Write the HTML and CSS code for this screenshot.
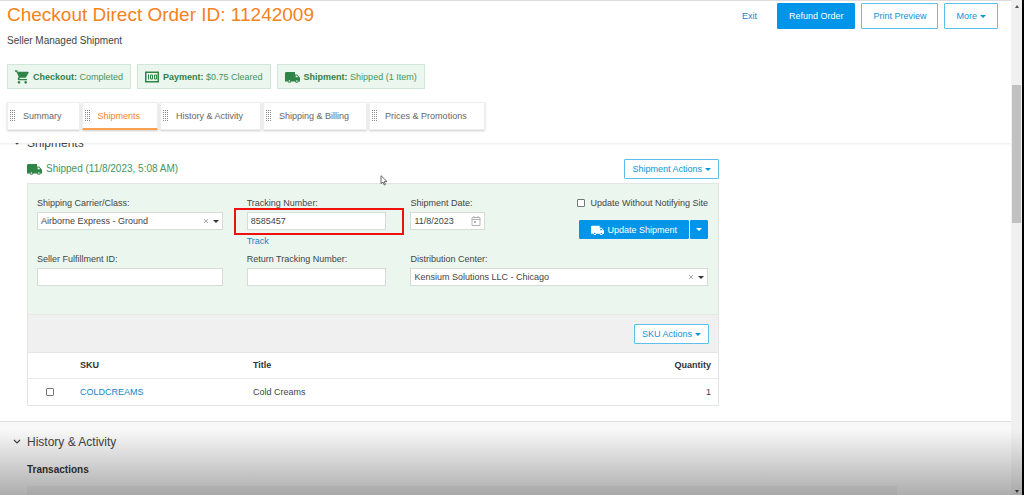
FILE: index.html
```html
<!DOCTYPE html>
<html lang="en">
<head>
<meta charset="utf-8">
<meta name="viewport" content="width=device-width, initial-scale=1">
<title>Checkout Direct Order</title>
<link rel="stylesheet" href="styles.css">
</head>
<body>
<svg class="defs" aria-hidden="true">
  <symbol id="truck" viewBox="0 0 24 18">
    <path fill="currentColor" d="M2 1h14v4h3.500L24 10v6h-2.200a3 3 0 0 1-5.800 0H10a3 3 0 0 1-5.800 0H0V3a2 2 0 0 1 2-2z"/>
    <path fill="var(--hole)" d="M17 6.500h2l2.200 3H17z"/>
    <circle cx="7" cy="15.300" r="1.300" fill="var(--hole)"/>
    <circle cx="19" cy="15.300" r="1.300" fill="var(--hole)"/>
  </symbol>
  <symbol id="grip" viewBox="0 0 6 12">
    <path d="M.5 0v12M2.500 0v12M4.500 0v12" stroke="#8a8a8a" stroke-width="1" stroke-dasharray="1 1" fill="none"/>
  </symbol>
</svg>
<div class="window">
  <main class="page">
    <header class="header">
      <div class="title-row">
        <h1 class="title">Checkout Direct Order ID: 11242009</h1>
        <nav class="actions">
          <a class="exit" href="#">Exit</a>
          <button class="btn btn-primary btn-large">Refund Order</button>
          <button class="btn btn-large">Print Preview</button>
          <button class="btn btn-large">More <span class="caret"></span></button>
        </nav>
      </div>
      <p class="subtitle">Seller Managed Shipment</p>
      <div class="badges">
        <div class="badge">
          <svg class="icon-cart" viewBox="1 2 21 20"><path fill="currentColor" d="M7 18c-1.100 0-2 .9-2 2s.9 2 2 2 2-.9 2-2-.9-2-2-2zM1 2v2h2l3.600 7.600-1.400 2.400C4.500 15.400 5.500 17 7 17h12v-2H7.400l1.200-2h7.400c.8 0 1.400-.4 1.800-1l3.600-6.500A1 1 0 0 0 20.500 4H5.200L4.300 2H1zm16 16c-1.100 0-2 .9-2 2s.9 2 2 2 2-.9 2-2-.9-2-2-2z"/></svg>
          <span><b>Checkout:</b> Completed</span>
        </div>
        <div class="badge">
          <svg class="icon-cash" viewBox="0 0 14 12"><path fill="none" stroke="currentColor" stroke-width="1.500" d="M.75 1.250h12.500v9.500H.75z"/><path fill="none" stroke="currentColor" d="M3.500 3.500v5M5.500 4h2v4h-2zM9.500 4h2v4h-2z"/></svg>
          <span><b>Payment:</b> $0.75 Cleared</span>
        </div>
        <div class="badge">
          <svg class="icon-truck"><use href="#truck"/></svg>
          <span><b>Shipment:</b> Shipped (1 Item)</span>
        </div>
      </div>
      <nav class="tabs">
        <a class="tab" href="#"><svg class="grip"><use href="#grip"/></svg>Summary</a>
        <a class="tab active" href="#"><svg class="grip"><use href="#grip"/></svg>Shipments</a>
        <a class="tab" href="#"><svg class="grip"><use href="#grip"/></svg>History &amp; Activity</a>
        <a class="tab" href="#"><svg class="grip"><use href="#grip"/></svg>Shipping &amp; Billing</a>
        <a class="tab" href="#"><svg class="grip"><use href="#grip"/></svg>Prices &amp; Promotions</a>
      </nav>
    </header>

    <section class="shipments">
      <h2 class="section-title"><svg class="chevron" viewBox="0 0 8 6"><path d="M1 1l3 3 3-3"/></svg>Shipments</h2>
      <div class="card-wrap">
        <div class="status-row">
          <div class="status"><svg class="icon-truck"><use href="#truck"/></svg>Shipped (11/8/2023, 5:08 AM)</div>
          <button class="btn">Shipment Actions <span class="caret"></span></button>
        </div>
        <div class="card">
          <form class="form">
            <div class="field">
              <label for="carrier">Shipping Carrier/Class:</label>
              <div class="picker">
                <select id="carrier"><option>Airborne Express - Ground</option></select>
                <span class="picker-icons"><svg class="clear" viewBox="0 0 6 6"><path d="M1 1l4 4M5 1L1 5"/></svg><span class="caret dark"></span></span>
              </div>
            </div>
            <div class="field tracking">
              <label for="tracking">Tracking Number:</label>
              <input id="tracking" type="text" value="8585457">
              <a class="track" href="#">Track</a>
            </div>
            <div class="date-row">
              <div class="field">
                <label for="date">Shipment Date:</label>
                <div class="date">
                  <input id="date" type="text" value="11/8/2023">
                  <svg class="calendar" viewBox="0 0 10 10"><path fill="none" stroke="#b4b4b4" d="M1 1.500h8v8H1zM1 3.500h8M3 0v2M7 0v2"/><path fill="#b4b4b4" d="M3 5h2v2H3z"/></svg>
                </div>
              </div>
              <div class="update">
                <label class="check"><input type="checkbox"> Update Without Notifying Site</label>
                <div class="split">
                  <button type="button" class="btn btn-primary btn-update"><svg class="icon-truck"><use href="#truck"/></svg>Update Shipment</button>
                  <button type="button" class="btn btn-primary btn-more" aria-label="More update options"><span class="caret"></span></button>
                </div>
              </div>
            </div>
            <div class="field">
              <label for="fulfillment">Seller Fulfillment ID:</label>
              <input id="fulfillment" type="text">
            </div>
            <div class="field">
              <label for="return">Return Tracking Number:</label>
              <input id="return" type="text">
            </div>
            <div class="field">
              <label for="center">Distribution Center:</label>
              <div class="picker">
                <select id="center"><option>Kensium Solutions LLC - Chicago</option></select>
                <span class="picker-icons"><svg class="clear" viewBox="0 0 6 6"><path d="M1 1l4 4M5 1L1 5"/></svg><span class="caret dark"></span></span>
              </div>
            </div>
          </form>
          <div class="toolbar"><button class="btn">SKU Actions <span class="caret"></span></button></div>
          <table class="items">
            <thead><tr><th class="col-check"></th><th class="col-sku">SKU</th><th>Title</th><th class="num">Quantity</th></tr></thead>
            <tbody><tr><td class="col-check"><input type="checkbox" aria-label="Select COLDCREAMS"></td><td><a href="#">COLDCREAMS</a></td><td>Cold Creams</td><td class="num">1</td></tr></tbody>
          </table>
        </div>
      </div>
    </section>

    <section class="history">
      <h2 class="section-title"><svg class="chevron" viewBox="0 0 8 6"><path d="M1 1l3 3 3-3"/></svg>History &amp; Activity</h2>
      <h3 class="transactions">Transactions</h3>
      <div class="transactions-table"></div>
    </section>
  </main>
  <div class="scrollbar"><span class="arrow up"></span><span class="thumb"></span><span class="arrow down"></span></div>
  <div class="shade"></div>
  <svg class="pointer" viewBox="0 0 8 11"><path d="M1 .7v8l2-1.700 1.300 3 1.200-.5L4.200 6.600H7z" fill="#fff" stroke="#444" stroke-width=".8"/></svg>
</div>
</body>
</html>
```

FILE: styles.css
```css
* { box-sizing: border-box; }
body {
  margin: 0;
  font: 9px/12px "Liberation Sans", Arial, sans-serif;
  color: #444;
  background: #fff;
}
h1, h2, h3, p { margin: 0; font-weight: normal; }
a { color: #1685c4; text-decoration: none; }
button, input, select { font: inherit; color: inherit; margin: 0; }
.defs { position: absolute; width: 0; height: 0; }

.window {
  position: relative;
  display: flex;
  height: 100vh;
  overflow: hidden;
  border-right: 2px solid #000;
}
.page { flex: 1; min-width: 0; display: flex; flex-direction: column; overflow: hidden; }

.header {
  position: relative;
  z-index: 1;
  flex: none;
  padding: 2px 13px 13px 7px;
  border-top: 1px solid #ddd;
  background: #fff;
  box-shadow: 0 1px 2px rgba(0, 0, 0, .08);
}
.title-row { display: flex; justify-content: space-between; }
.title { font-size: 19px; line-height: 24px; color: #f58220; }
.actions { display: flex; align-items: center; gap: 6px; }
.exit { margin-right: 14px; }
.subtitle { margin-top: 6px; font-size: 10px; }

.btn {
  display: inline-flex;
  align-items: center;
  justify-content: center;
  gap: 3px;
  height: 20px;
  padding: 0 7px;
  border: 1px solid #5cc0ea;
  border-radius: 1px;
  background: #fff;
  color: #0d93d8;
  white-space: nowrap;
}
.btn-large { height: 26px; padding: 0 11px; }
.btn-primary { background: #0095e8; border-color: #0095e8; color: #fff; }
.caret { border: 3px solid transparent; border-top-color: currentColor; border-bottom: 0; }
.caret.dark { color: #333; }

.badges { display: flex; gap: 6px; margin-top: 17px; }
.badge {
  display: flex;
  align-items: center;
  gap: 4px;
  height: 25px;
  padding: 0 7px;
  border: 1px solid #cfe6d8;
  background: #ebf6ef;
  color: #469559;
}
.badge b { color: #338048; }
.icon-cart { width: 14px; height: 14px; }
.icon-cash { width: 14px; height: 12px; }
.icon-truck { --hole: #ebf6ef; width: 15px; height: 12px; }
.icon-cart, .icon-cash, .badge .icon-truck { color: #2f8548; }

.tabs { display: flex; gap: 2px; margin-top: 13px; }
.tab {
  display: flex;
  align-items: center;
  gap: 7px;
  height: 28px;
  padding: 0 17px 0 2px;
  border: 1px solid #eee;
  box-shadow: 0 1px 2px rgba(0, 0, 0, .2);
  color: #666;
}
.tab.active { color: #f58220; border-bottom: 2px solid #f9a050; }
.grip { width: 6px; height: 12px; }

.section-title { display: flex; align-items: center; gap: 6px; font-size: 12px; line-height: 16px; }
.chevron { width: 8px; height: 6px; fill: none; stroke: #444; stroke-width: 1.2; }

.shipments { margin-top: -8px; padding: 0 12px 15px 13px; border-bottom: 1px solid #ddd; }
.card-wrap { max-width: 706px; padding-left: 14px; }
.status-row { display: flex; align-items: center; justify-content: space-between; padding: 8px 0 4px; }
.status { display: flex; align-items: center; gap: 4px; font-size: 10px; color: #469559; }
.status .icon-truck { --hole: #fff; color: #2f8548; }
.card { border: 1px solid #e2e7e4; }
.form {
  display: grid;
  grid-template-columns: 186fr 140fr 298fr;
  gap: 6px 24px;
  padding: 13px 10px 28px 9px;
  background: #ebf6ef;
}
.field { display: flex; flex-direction: column; gap: 3px; min-width: 0; }
.field input, .field select {
  width: 100%;
  height: 18px;
  padding: 0 3px;
  border: 1px solid #d5dcd8;
  border-radius: 0;
  background: #fff;
  appearance: none;
  outline: 0;
}
.picker, .date, .tracking { position: relative; }
.picker select { display: block; }
.picker-icons {
  position: absolute;
  inset: 0 4px 0 auto;
  display: flex;
  align-items: center;
  gap: 4px;
  pointer-events: none;
}
.clear { width: 6px; height: 6px; stroke: #aaa; fill: none; }
.tracking::after {
  content: "";
  position: absolute;
  top: 11px;
  left: -13px;
  right: -18px;
  height: 23px;
  border: 2px solid #f01010;
  pointer-events: none;
}
.track { margin-top: 2px; }
.date-row { display: flex; justify-content: space-between; }
.date { width: 75px; }
.calendar { position: absolute; top: 4px; right: 4px; width: 10px; height: 10px; }
.update { display: flex; flex-direction: column; align-items: flex-end; gap: 11px; }
.check { display: flex; align-items: center; gap: 5px; }
input[type="checkbox"] {
  appearance: none;
  width: 8px;
  height: 8px;
  border: 1px solid #777;
  border-radius: 1px;
  background: #fff;
}
.split { display: flex; gap: 1px; }
.split .btn { height: 19px; }
.btn-update { padding: 0 11px; }
.btn-more { padding: 0 5px; }
.split .icon-truck { --hole: #0095e8; width: 13px; height: 10px; }

.toolbar {
  display: flex;
  justify-content: flex-end;
  padding: 9px 9px 8px;
  border-top: 1px solid #e4e8e6;
  border-bottom: 1px solid #e4e4e4;
  background: #f0f0f0;
}
.items { width: 100%; border-collapse: collapse; table-layout: fixed; }
.items th, .items td { padding: 0; text-align: left; }
.items th { height: 25px; color: #333; border-bottom: 1px solid #e8e8e8; }
.items td { height: 27px; }
.items .col-check { width: 52px; padding-left: 18px; }
.items .col-check input { display: block; }
.items .col-sku { width: 173px; }
.items .num { padding-right: 7px; text-align: right; }

.history { flex: 1; padding: 12px 12px 0 13px; background: #f8f8f8; }
.transactions { padding: 14px 0 10px 14px; font-size: 10px; font-weight: bold; color: #333; }
.transactions-table {
  height: 20px;
  margin: 0 102px 0 14px;
  border: 1px solid #eee;
  background: #f0f0f0;
}

.scrollbar {
  width: 11px;
  display: flex;
  flex-direction: column;
  align-items: center;
  padding: 5px 0 2px;
  background: #f0f0f0;
}
.thumb { width: 9px; height: 138px; margin: 77px 0 auto; background: #c1c1c1; }
.arrow { border: 2px solid transparent; }
.up { border-top: 0; border-bottom: 3px solid #555; }
.down { border-bottom: 0; border-top: 3px solid #444; }
.shade {
  position: absolute;
  z-index: 2;
  inset: auto 0 0 0;
  height: 65px;
  background: linear-gradient(rgba(0, 0, 0, 0), rgba(0, 0, 0, .3));
  pointer-events: none;
}
.pointer { position: absolute; left: 380px; top: 175px; width: 8px; height: 11px; z-index: 3; }
```
